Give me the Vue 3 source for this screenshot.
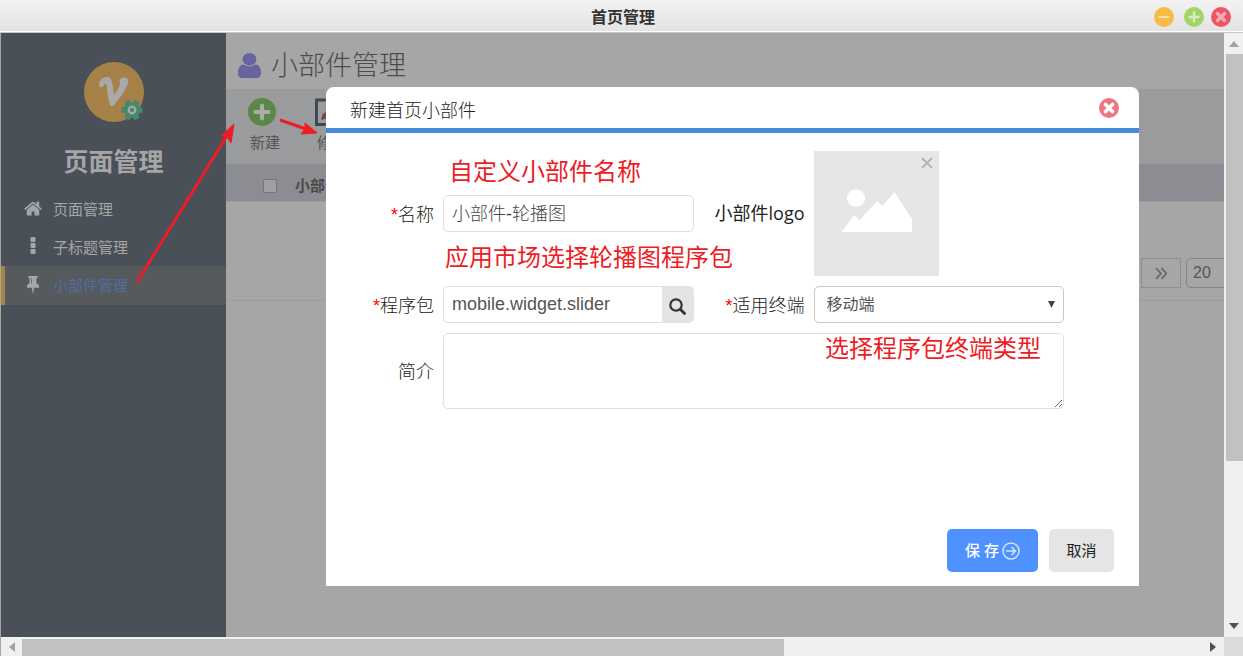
<script setup>
import { ref } from 'vue'

const name = ref('小部件-轮播图')
const pack = ref('mobile.widget.slider')
const terminal = ref('移动端')
const intro = ref('')
</script>

<template>
  <div class="window">
    <header class="titlebar">
      <h1>首页管理</h1>
      <div class="controls">
        <button class="min" aria-label="最小化">
          <svg viewBox="0 0 20 20"><circle cx="10" cy="10" r="10" fill="#f8bb45" /><path d="M5.500 10H14.500" stroke="#fde0a4" stroke-width="2.200" stroke-linecap="round" /></svg>
        </button>
        <button class="max" aria-label="最大化">
          <svg viewBox="0 0 20 20"><circle cx="10" cy="10" r="10" fill="#a1d568" /><path d="M5.500 10H14.500M10 5.500V14.500" stroke="#d6eebb" stroke-width="2.400" stroke-linecap="round" /></svg>
        </button>
        <button aria-label="关闭">
          <svg viewBox="0 0 20 20"><circle cx="10" cy="10" r="10" fill="#ec5564" /><path d="M6.500 6.500L13.500 13.500M13.500 6.500L6.500 13.500" stroke="#f6aab2" stroke-width="3.400" stroke-linecap="round" /></svg>
        </button>
      </div>
    </header>

    <div class="viewport">
      <div class="page">
        <aside>
          <svg class="logo" viewBox="0 0 60 60">
            <circle cx="30" cy="30" r="30" fill="#a58148" />
            <path d="M15 23C15 18 19 15 23 15C28 15 28.500 20 30 33C35 26 37 22 35.500 20C35 17 38 15 41 15.500C45 16 45 21 42 26C39 32 34 38 30 43C29 45 26.500 44.500 26 43C24 37 23.500 30 22.500 23C22 21 21 21 20 23C19.500 26 15 26 15 23Z" fill="#a9a9a9" />
            <g fill="#46896a">
              <circle cx="48" cy="48" r="8" />
              <rect x="37.500" y="45" width="21" height="6" rx="1.500" />
              <rect x="37.500" y="45" width="21" height="6" rx="1.500" transform="rotate(60 48 48)" />
              <rect x="37.500" y="45" width="21" height="6" rx="1.500" transform="rotate(120 48 48)" />
            </g>
            <circle cx="48" cy="48" r="3.300" fill="none" stroke="#a9a9a9" stroke-width="2.200" />
          </svg>
          <h2>页面管理</h2>
          <nav>
            <a href="#pages">
              <svg viewBox="0 0 1664 1664"><path d="M1408 992v480q0 26-19 45t-45 19h-384v-384h-256v384h-384q-26 0-45-19t-19-45v-480q0-1 .5-3t.5-3l575-474 575 474q1 2 1 6zm223-69l-62 74q-8 9-21 11h-3q-13 0-21-7l-692-577-692 577q-12 8-24 7-13-2-21-11l-62-74q-8-10-7-23.500t11-21.500l719-599q32-26 76-26t76 26l244 204v-195q0-14 9-23t23-9h192q14 0 23 9t9 23v408l219 182q10 8 11 21.500t-7 23.500z" /></svg>
              <span>页面管理</span>
            </a>
            <a href="#subtitles">
              <svg viewBox="0 0 18 18"><rect x="6.500" y="0" width="5" height="5" rx="1.200" /><rect x="6.500" y="6" width="5" height="5" rx="1.200" /><rect x="6.500" y="12" width="5" height="5" rx="1.200" /></svg>
              <span>子标题管理</span>
            </a>
            <a href="#widgets" class="active">
              <svg viewBox="64 192 1664 1664"><path d="M800 864v-448q0-14-9-23t-23-9-23 9-9 23v448q0 14 9 23t23 9 23-9 9-23zm672 352q0 26-19 45t-45 19h-429l-51 483q-2 12-10.500 20.500t-20.500 8.500h-1q-27 0-32-27l-76-485h-404q-26 0-45-19t-19-45q0-123 78.500-221.500t177.500-98.500v-512q-52 0-90-38t-38-90 38-90 90-38h640q52 0 90 38t38 90-38 90-90 38v512q99 0 177.500 98.500t78.500 221.500z" /></svg>
              <span>小部件管理</span>
            </a>
          </nav>
        </aside>

        <main>
          <div class="heading">
            <svg viewBox="256 128 1280 1536" preserveAspectRatio="none"><path fill="#68649f" d="M1536 1399q0 109-62.500 187t-150.500 78h-854q-88 0-150.500-78t-62.500-187q0-85 8.500-160.500t31.500-152 58.500-131 94-89 134.500-34.500q131 128 313 128t313-128q76 0 134.500 34.500t94 89 58.500 131 31.500 152 8.500 160.500zm-256-887q0 159-112.500 271.500t-271.500 112.500-271.500-112.500-112.500-271.500 112.500-271.500 271.500-112.500 271.500 112.500 112.500 271.500z" /></svg>
            <h2>小部件管理</h2>
          </div>
          <div class="toolbar">
            <button>
              <svg viewBox="0 0 28 28"><circle cx="14" cy="14" r="14" fill="#5b8749" /><path d="M7.500 14H20.500M14 7.500V20.500" stroke="#acacac" stroke-width="4" stroke-linecap="round" /></svg>
              <span>新建</span>
            </button>
            <button>
              <svg viewBox="0 0 28 28"><rect x="1.500" y="2" width="25" height="24.500" fill="none" stroke="#424752" stroke-width="3" /><path d="M6 22L8 15L13 20Z" fill="#4a4f59" /><path d="M7 18L18 5L23 10L12 21Z" fill="#8d453c" /></svg>
              <span>修改</span>
            </button>
          </div>
          <table>
            <thead>
              <tr>
                <th class="check"><input type="checkbox" aria-label="全选" /></th>
                <th>小部件名称</th>
              </tr>
            </thead>
          </table>
          <div class="pager">
            <button aria-label="末页"><svg viewBox="0 0 12 12"><path d="M1 1L5.500 6L1 11M6 1L10.500 6L6 11" fill="none" stroke="#656565" stroke-width="1.500" /></svg></button>
            <select aria-label="每页条数"><option>20</option></select>
          </div>
        </main>

        <svg class="arrows" viewBox="0 0 340 300">
          <g stroke="#ee1c25" stroke-width="3" fill="#ee1c25">
            <path d="M137 249L228 101" />
            <path d="M234 91L221 103L227 104L231 110Z" stroke-width="1" />
            <path d="M280 87L306 96" />
            <path d="M317 100L301 101L305 96L305 90Z" stroke-width="1" />
          </g>
        </svg>

        <section class="modal" role="dialog" aria-labelledby="dialog-title">
          <div class="modal-head">
            <h3 id="dialog-title">新建首页小部件</h3>
            <button aria-label="关闭对话框">
              <svg viewBox="0 0 20 20"><circle cx="10" cy="10" r="10" fill="#f07583" /><path d="M6.500 6.500L13.500 13.500M13.500 6.500L6.500 13.500" stroke="#fff" stroke-width="3.600" stroke-linecap="round" /></svg>
            </button>
          </div>
          <form @submit.prevent>
            <div class="fields">
              <label for="name"><b>*</b>名称</label>
              <input id="name" v-model="name" type="text" />
              <span class="label">小部件logo</span>
              <div class="picture">
                <svg class="photo" viewBox="0 0 125 125"><g fill="#fff"><circle cx="42" cy="47" r="9" /><path d="M27.500 81L40 64L45.500 69.500L63 50L68.500 55L80.500 41L98 68V81Z" /></g></svg>
                <button type="button" aria-label="移除图片"><svg viewBox="0 0 12 12"><path d="M1 1L11 11M11 1L1 11" stroke="#b5b5b5" stroke-width="2" /></svg></button>
              </div>
              <label for="pack"><b>*</b>程序包</label>
              <div class="search">
                <input id="pack" v-model="pack" type="text" />
                <button type="button" aria-label="搜索"><svg viewBox="0 0 17 17"><circle cx="7" cy="7" r="5.700" fill="none" stroke="#333" stroke-width="2.200" /><path d="M11.300 11.300L15.500 15.500" stroke="#333" stroke-width="2.800" stroke-linecap="round" /></svg></button>
              </div>
              <label for="terminal"><b>*</b>适用终端</label>
              <div class="picker">
                <select id="terminal" v-model="terminal"><option>移动端</option></select>
                <svg viewBox="0 0 7 7"><path d="M0 0H7L3.500 7Z" fill="#444" /></svg>
              </div>
              <label for="intro">简介</label>
              <textarea id="intro" v-model="intro"></textarea>
            </div>
            <div class="actions">
              <button type="submit" class="save">保 存<svg viewBox="0 0 18 18"><circle cx="9" cy="9" r="8" /><path d="M4 9H13.500M9.500 5L13.500 9L9.500 13" /></svg></button>
              <button type="button" class="cancel">取消</button>
            </div>
          </form>
          <p class="note note-name">自定义小部件名称</p>
          <p class="note note-pack">应用市场选择轮播图程序包</p>
          <p class="note note-terminal">选择程序包终端类型</p>
        </section>
      </div>

      <div class="bar vertical">
        <svg viewBox="0 0 10 6"><path d="M5 0L10 6H0Z" fill="#a3a3a3" /></svg>
        <div class="track"><div class="thumb"></div></div>
        <svg viewBox="0 0 10 6"><path d="M0 0H10L5 6Z" fill="#505050" /></svg>
      </div>
      <div class="bar horizontal">
        <svg viewBox="0 0 6 10"><path d="M0 5L6 0V10Z" fill="#a3a3a3" /></svg>
        <div class="track"><div class="thumb"></div></div>
        <svg viewBox="0 0 6 10"><path d="M0 0L6 5L0 10Z" fill="#505050" /></svg>
      </div>
      <div class="corner"></div>
    </div>
  </div>
</template>

<style>
body {
  margin: 0;
}
</style>

<style scoped>
* {
  box-sizing: border-box;
}
.window {
  display: flex;
  flex-direction: column;
  height: 100vh;
  overflow: hidden;
  font-family: "Open Sans", "Noto Sans CJK SC", sans-serif;
}
h1, h2, h3, p {
  margin: 0;
}
button {
  padding: 0;
  border: 0;
  background: none;
  font: inherit;
  color: inherit;
}
svg {
  display: block;
  flex: none;
}
.titlebar {
  position: relative;
  display: flex;
  align-items: center;
  justify-content: center;
  height: 33px;
  flex: none;
  background: linear-gradient(#f2f2f2, #e3e3e3);
  border-bottom: 1px solid #c8c8c8;
  box-shadow: inset 0 -1px #fff;
}
.titlebar h1 {
  padding: 2px 0 0 3px;
  font-size: 16px;
  line-height: 24px;
  color: #333;
}
.controls {
  position: absolute;
  right: 12px;
  top: 7px;
  display: flex;
}
.controls svg {
  width: 20px;
  height: 20px;
}
.min {
  margin-right: 10px;
}
.max {
  margin-right: 7px;
}
.viewport {
  flex: 1;
  min-height: 0;
  display: grid;
  grid-template-columns: 1fr 19px;
  grid-template-rows: 1fr 19px;
  border-left: 1px solid #a6a6a6;
}
.page {
  position: relative;
  display: flex;
  min-width: 0;
  min-height: 0;
  overflow: hidden;
  background: #a6a6a6;
}
aside {
  width: 225px;
  flex: none;
  background: #495057;
  color: #a6a6a6;
}
.logo {
  width: 60px;
  height: 60px;
  margin: 29px auto 0 83px;
  overflow: visible;
}
aside h2 {
  margin: 21px 0 11px;
  font-size: 25px;
  line-height: 36px;
  text-align: center;
}
nav a {
  display: flex;
  align-items: center;
  gap: 11px;
  height: 38px;
  padding: 0 0 2px 23px;
  color: #a6a6a6;
  font-size: 15px;
  text-decoration: none;
}
nav svg {
  width: 18px;
  height: 18px;
  fill: #a6a6a6;
}
nav a.active {
  height: 39px;
  padding-left: 19px;
  border-left: 4px solid #a58343;
  background: #565a5c;
  color: #526ca3;
}
main {
  flex: 1;
  min-width: 0;
}
.heading {
  display: flex;
  align-items: center;
  gap: 10px;
  height: 56px;
  padding: 8px 12px 0;
}
.heading svg {
  width: 23px;
  height: 25px;
}
.heading h2 {
  font-size: 27px;
  line-height: 36px;
  font-weight: 300;
  color: #4c4c4c;
}
.toolbar {
  display: flex;
  gap: 33px;
  height: 75px;
  padding: 9px 22px;
  background: #9a9b9d;
}
.toolbar button {
  width: 34px;
  display: flex;
  flex-direction: column;
  color: #555;
  font-size: 15px;
  line-height: 22px;
}
.toolbar span {
  margin-top: 5px;
  align-self: center;
}
.toolbar svg {
  width: 28px;
  height: 28px;
}
table {
  width: 100%;
  border-collapse: collapse;
}
th {
  height: 37px;
  padding: 5px 0 0;
  background: #8c8d92;
  color: #4a4a4a;
  font-size: 15px;
  line-height: 22px;
  text-align: left;
}
.check {
  width: 69px;
  padding: 7px 0 0 37px;
}
.check input {
  appearance: none;
  display: block;
  width: 14px;
  height: 14px;
  margin: 0;
  border: 1px solid #767676;
  border-radius: 2px;
  background: #a0a0a0;
}
.pager {
  display: flex;
  justify-content: flex-end;
  gap: 5px;
  height: 100px;
  padding-top: 56px;
  border-top: 1px solid #9d9d9d;
  border-bottom: 1px solid #9d9d9d;
}
.pager button {
  width: 40px;
  height: 30px;
  display: flex;
  align-items: center;
  justify-content: center;
  border: 1px solid #8e8e8e;
}
.pager svg {
  width: 13px;
  height: 13px;
}
.pager select {
  appearance: none;
  width: 68px;
  height: 30px;
  margin-right: -30px;
  padding: 0 6px 2px;
  border: 1px solid #858585;
  border-radius: 5px;
  background: transparent;
  color: #555;
  font: 16px "Liberation Sans", sans-serif;
}
.arrows {
  position: absolute;
  left: -1px;
  top: 0;
  width: 340px;
  height: 300px;
  pointer-events: none;
}
.modal {
  position: absolute;
  inset: 54px 85px 51px 325px;
  display: flex;
  flex-direction: column;
  border-radius: 8px 8px 0 0;
  background: #fff;
  color: #222;
  font-size: 18px;
}
.modal-head {
  display: flex;
  align-items: center;
  justify-content: space-between;
  height: 46px;
  flex: none;
  padding: 0 20px 0 24px;
  border-bottom: 5px solid #468ad9;
}
.modal-head h3 {
  font-size: 18px;
  line-height: 26px;
  font-weight: 300;
  padding-top: 4px;
}
.modal-head svg {
  width: 20px;
  height: 20px;
}
form {
  flex: 1;
  display: flex;
  flex-direction: column;
  padding-top: 18px;
}
.fields {
  display: grid;
  grid-template-columns: 108px 1fr 102px 1fr;
  gap: 10px 9px;
  align-items: center;
  padding-right: 75px;
}
label, .label {
  text-align: right;
  white-space: nowrap;
  line-height: 26px;
  font-weight: 300;
}
.label {
  font-weight: 400;
  padding-bottom: 1px;
}
label b {
  color: #f00;
  font: 18px "Liberation Sans", sans-serif;
}
.fields input, .fields select, textarea {
  width: 100%;
  min-width: 0;
  height: 37px;
  margin: 0;
  padding: 0 8px;
  border: 1px solid #e0e0e0;
  border-radius: 5px;
  background: #fff;
  color: #555;
  font: 18px "Liberation Sans", "Noto Sans CJK SC", sans-serif;
}
.fields #name {
  padding-bottom: 3px;
  color: #444;
  font-weight: 300;
}
.search {
  display: flex;
}
.fields .search input {
  flex: 1;
  border-right: 0;
  border-radius: 5px 0 0 5px;
}
.search button {
  width: 32px;
  display: flex;
  align-items: center;
  justify-content: center;
  padding-top: 3px;
  border-radius: 0 5px 5px 0;
  background: #e4e4e4;
}
.search button svg {
  width: 17px;
  height: 17px;
}
.picker {
  position: relative;
}
.picker select {
  appearance: none;
  display: block;
  padding: 0 12px;
  border-color: #c8c8c8;
  font-size: 16px;
}
.picker svg {
  position: absolute;
  right: 9px;
  top: 15px;
  width: 7px;
  height: 7px;
  pointer-events: none;
}
.fields textarea {
  display: block;
  grid-column: span 3;
  height: 76px;
  resize: vertical;
}
.picture {
  position: relative;
  width: 125px;
  height: 125px;
  background: #e6e6e6;
}
.photo {
  width: 125px;
  height: 125px;
}
.picture button {
  position: absolute;
  top: 6px;
  right: 6px;
}
.picture button svg {
  width: 12px;
  height: 12px;
}
.actions {
  display: flex;
  justify-content: flex-end;
  gap: 11px;
  margin-top: auto;
  padding: 0 25px 14px;
}
.actions button {
  display: flex;
  align-items: center;
  justify-content: center;
  height: 43px;
  padding-bottom: 2px;
  border-radius: 5px;
  font-size: 15px;
}
.actions .save {
  gap: 3px;
  width: 91px;
  background: #4f91ff;
  color: #fff;
  font-weight: 500;
}
.save svg {
  width: 18px;
  height: 18px;
  margin-top: 3px;
  fill: none;
  stroke: #d5e5ff;
  stroke-width: 1.5px;
}
.actions .cancel {
  width: 65px;
  background: #e5e5e5;
}
.note {
  position: absolute;
  color: #ee1c25;
  font-size: 24px;
  line-height: 34px;
  white-space: nowrap;
  pointer-events: none;
}
.note-name {
  left: 123px;
  top: 67px;
}
.note-pack {
  left: 119px;
  top: 153px;
}
.note-terminal {
  left: 499px;
  top: 244px;
}
.bar {
  display: flex;
  align-items: center;
  justify-content: space-between;
  background: #f0f0f0;
}
.vertical {
  flex-direction: column;
  padding: 8px 0;
}
.vertical svg {
  width: 10px;
  height: 6px;
}
.vertical .track {
  flex: 1;
  width: 17px;
  margin: 7px 0;
  align-self: flex-end;
}
.vertical .thumb {
  height: 72.5%;
  background: #c1c1c1;
}
.horizontal {
  padding: 0 8px;
}
.horizontal svg {
  width: 6px;
  height: 10px;
}
.horizontal .track {
  flex: 1;
  height: 17px;
  margin: 0 7px;
  align-self: flex-end;
}
.horizontal .thumb {
  width: 64.5%;
  height: 100%;
  background: #c1c1c1;
}
.corner {
  background: #dcdcdc;
}
</style>
